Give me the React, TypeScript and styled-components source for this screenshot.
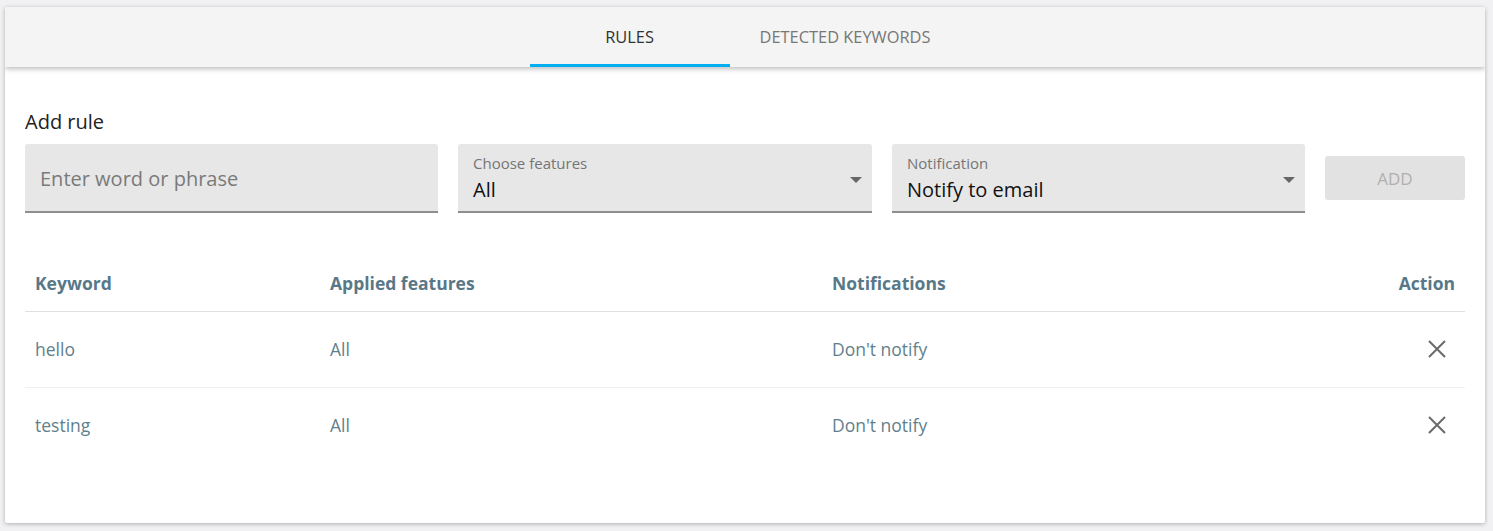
import React, { useState } from 'react';
import styled, { createGlobalStyle } from 'styled-components';

const GlobalStyle = createGlobalStyle`
  html, body {
    margin: 0;
    padding: 0;
    background: #f1f1f3;
    font-family: 'Open Sans', 'Liberation Sans', sans-serif;
  }
  * {
    box-sizing: border-box;
  }
`;

const Page = styled.div`
  padding: 7px 8px 8px 5px;
`;

const Card = styled.div`
  width: 1480px;
  height: 516px;
  background: #ffffff;
  border-radius: 2px;
  box-shadow: 0 1px 4px rgba(0, 0, 0, 0.28);
  overflow: hidden;
`;

const TabBar = styled.div`
  height: 60px;
  background: #f4f4f4;
  display: flex;
  justify-content: center;
  box-shadow: 0 2px 5px rgba(0, 0, 0, 0.26);
  position: relative;
  z-index: 1;
`;

const Tab = styled.button<{ $active?: boolean }>`
  min-width: 200px;
  padding: 1px 30px 0;
  height: 60px;
  border: none;
  background: transparent;
  font-family: inherit;
  font-size: 16.4px;
  text-transform: uppercase;
  color: ${(p) => (p.$active ? '#333' : '#777')};
  border-bottom: 3px solid ${(p) => (p.$active ? '#03aef3' : 'transparent')};
  cursor: pointer;
`;

const Content = styled.div`
  padding: 41px 20px 0;
`;

const Title = styled.div`
  font-size: 20px;
  color: #222;
  line-height: 28px;
  margin-bottom: 8px;
`;

const FormRow = styled.div`
  display: grid;
  grid-template-columns: 413px 414px 413px 140px;
  gap: 20px;
  align-items: start;
`;

const FieldBox = styled.div<{ $select?: boolean }>`
  height: 69px;
  background: #e7e7e7;
  border-radius: 3px 3px 0 0;
  border-bottom: 2px solid #8e8e8e;
  position: relative;
  display: flex;
  flex-direction: column;
  justify-content: ${(p) => (p.$select ? 'flex-start' : 'center')};
  padding: ${(p) => (p.$select ? '10px 15px 0' : '0 15px')};
`;

const Input = styled.input`
  border: none;
  background: transparent;
  outline: none;
  font-family: inherit;
  font-size: 20px;
  color: #222;
  padding: 0;
  margin-top: 1px;
  &::placeholder {
    color: #7a7a7a;
  }
`;

const SelectLabel = styled.div`
  font-size: 15px;
  color: #757575;
  line-height: 18px;
`;

const SelectValue = styled.div`
  font-size: 20px;
  color: #111;
  line-height: 28px;
  margin-top: 4px;
`;

const Arrow = styled.span`
  position: absolute;
  right: 10px;
  top: 33px;
  width: 0;
  height: 0;
  border-left: 6px solid transparent;
  border-right: 6px solid transparent;
  border-top: 6px solid #666;
`;

const AddButton = styled.button`
  margin-top: 12px;
  height: 44px;
  border: none;
  border-radius: 3px;
  background: #e2e2e2;
  color: #b0b0b0;
  font-family: inherit;
  font-size: 17px;
  text-transform: uppercase;
`;

const Table = styled.div`
  margin-top: 41px;
`;

const Row = styled.div<{ $head?: boolean }>`
  display: grid;
  grid-template-columns: 295px 502px 1fr 120px;
  align-items: center;
  height: ${(p) => (p.$head ? '58px' : '76px')};
  border-bottom: 1px solid ${(p) => (p.$head ? '#e0e0e0' : '#f1f1f1')};
  &:last-child {
    border-bottom: none;
  }
`;

const HeadCell = styled.div<{ $right?: boolean }>`
  padding: 0 10px;
  font-size: 17.5px;
  font-weight: 700;
  color: #587888;
  text-align: ${(p) => (p.$right ? 'right' : 'left')};
`;

const Cell = styled.div<{ $right?: boolean }>`
  padding: 0 10px;
  font-size: 17.5px;
  color: #5f7f8c;
  display: flex;
  justify-content: ${(p) => (p.$right ? 'flex-end' : 'flex-start')};
  margin-top: -2px;
`;

const RemoveButton = styled.button`
  border: none;
  background: transparent;
  padding: 0;
  margin-right: 8px;
  width: 20px;
  height: 20px;
  display: flex;
  align-items: center;
  justify-content: center;
  cursor: pointer;
`;

const CloseIcon = () => (
  <svg width="20" height="20" viewBox="0 0 20 20">
    <path d="M2 2 L18 18 M18 2 L2 18" stroke="#6a6a6a" strokeWidth="2" fill="none" />
  </svg>
);

const rules = [
  { keyword: 'hello', features: 'All', notification: "Don't notify" },
  { keyword: 'testing', features: 'All', notification: "Don't notify" },
];

export default function App() {
  const [tab, setTab] = useState(0);
  return (
    <>
      <GlobalStyle />
      <Page>
        <Card>
          <TabBar>
            <Tab $active={tab === 0} onClick={() => setTab(0)}>Rules</Tab>
            <Tab $active={tab === 1} onClick={() => setTab(1)}>Detected keywords</Tab>
          </TabBar>
          <Content>
            <Title>Add rule</Title>
            <FormRow>
              <FieldBox>
                <Input placeholder="Enter word or phrase" />
              </FieldBox>
              <FieldBox $select>
                <SelectLabel>Choose features</SelectLabel>
                <SelectValue>All</SelectValue>
                <Arrow />
              </FieldBox>
              <FieldBox $select>
                <SelectLabel>Notification</SelectLabel>
                <SelectValue>Notify to email</SelectValue>
                <Arrow />
              </FieldBox>
              <AddButton disabled>Add</AddButton>
            </FormRow>
            <Table>
              <Row $head>
                <HeadCell>Keyword</HeadCell>
                <HeadCell>Applied features</HeadCell>
                <HeadCell>Notifications</HeadCell>
                <HeadCell $right>Action</HeadCell>
              </Row>
              {rules.map((r) => (
                <Row key={r.keyword}>
                  <Cell>{r.keyword}</Cell>
                  <Cell>{r.features}</Cell>
                  <Cell>{r.notification}</Cell>
                  <Cell $right>
                    <RemoveButton>
                      <CloseIcon />
                    </RemoveButton>
                  </Cell>
                </Row>
              ))}
            </Table>
          </Content>
        </Card>
      </Page>
    </>
  );
}
